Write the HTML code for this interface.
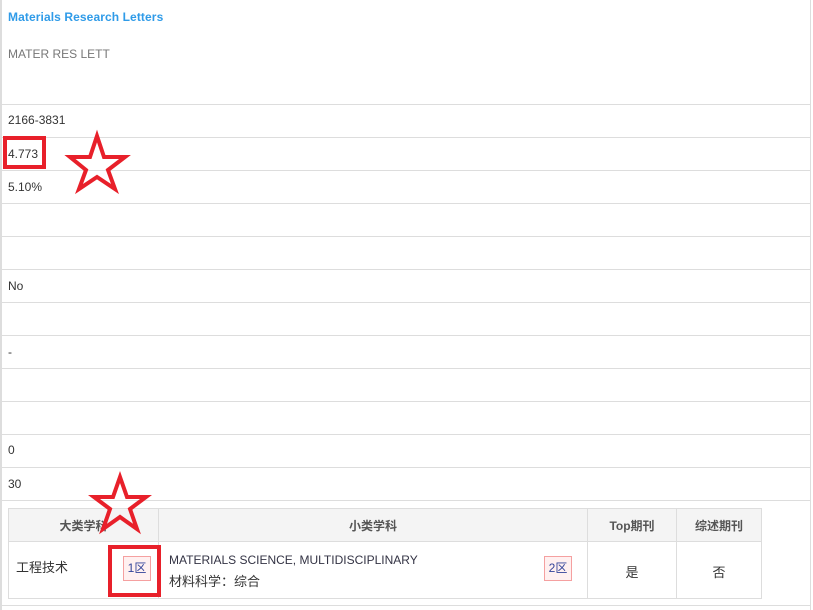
<!DOCTYPE html>
<html><head><meta charset="utf-8"><style>
*{margin:0;padding:0;box-sizing:border-box}
body{width:813px;height:610px;background:#fff;font-family:"Liberation Sans","Noto Sans CJK SC",sans-serif;font-size:12px;color:#333;position:relative;overflow:hidden}
.a{position:absolute}
.h{position:absolute;left:1px;width:810px;height:1px;background:#ddd}
.t{position:absolute;left:8px}
</style></head><body>
<div class="a" style="left:0;top:0;width:2px;height:610px;background:#ddd"></div>
<div class="a" style="left:810px;top:0;width:1px;height:610px;background:#ddd"></div>
<div class="t" style="top:10px;color:#2f9be8;font-weight:bold;letter-spacing:0.1px">Materials Research Letters</div>
<div class="t" style="top:47px;color:#777">MATER RES LETT</div>
<div class="h" style="top:104px"></div>
<div class="t" style="top:113px">2166-3831</div>
<div class="h" style="top:137px"></div>
<div class="t" style="top:147px">4.773</div>
<div class="h" style="top:170px"></div>
<div class="t" style="top:180px">5.10%</div>
<div class="h" style="top:203px"></div>
<div class="h" style="top:236px"></div>
<div class="h" style="top:269px"></div>
<div class="t" style="top:279px">No</div>
<div class="h" style="top:302px"></div>
<div class="h" style="top:335px"></div>
<div class="t" style="top:345px">-</div>
<div class="h" style="top:368px"></div>
<div class="h" style="top:401px"></div>
<div class="h" style="top:434px"></div>
<div class="t" style="top:443px">0</div>
<div class="h" style="top:467px"></div>
<div class="t" style="top:477px">30</div>
<div class="h" style="top:500px"></div>
<div class="h" style="top:605px"></div>
<div class="a" style="left:8px;top:508px;width:754px;height:91px;border:1px solid #ddd"></div>
<div class="a" style="left:9px;top:509px;width:752px;height:33px;background:#f4f4f4;border-bottom:1px solid #ddd"></div>
<div class="a" style="left:158px;top:508px;width:1px;height:91px;background:#ddd"></div>
<div class="a" style="left:587px;top:508px;width:1px;height:91px;background:#ddd"></div>
<div class="a" style="left:676px;top:508px;width:1px;height:91px;background:#ddd"></div>
<div class="a" style="left:9px;top:517px;width:149px;text-align:center;color:#555;font-weight:bold">大类学科</div>
<div class="a" style="left:159px;top:517px;width:428px;text-align:center;color:#555;font-weight:bold">小类学科</div>
<div class="a" style="left:588px;top:517px;width:88px;text-align:center;color:#555;font-weight:bold">Top期刊</div>
<div class="a" style="left:677px;top:517px;width:84px;text-align:center;color:#555;font-weight:bold">综述期刊</div>
<div class="a" style="left:16px;top:557px;font-size:13px">工程技术</div>
<div class="a" style="left:123px;top:556px;width:28px;height:25px;border:1px solid #f5a0a0;background:#fff0f0;color:#33449a;text-align:center;line-height:23px">1区</div>
<div class="a" style="left:169px;top:553px;color:#334">MATERIALS SCIENCE, MULTIDISCIPLINARY</div>
<div class="a" style="left:169px;top:571px;font-size:13px">材料科学：综合</div>
<div class="a" style="left:544px;top:556px;width:28px;height:25px;border:1px solid #f5a0a0;background:#fff0f0;color:#33449a;text-align:center;line-height:23px">2区</div>
<div class="a" style="left:588px;top:562px;width:88px;text-align:center;font-size:13px">是</div>
<div class="a" style="left:677px;top:562px;width:84px;text-align:center;font-size:13px">否</div>
<div class="a" style="left:3px;top:136px;width:43px;height:33px;border:4px solid #e8202a"></div>
<div class="a" style="left:108px;top:545px;width:53px;height:52px;border:4px solid #e8202a"></div>
<svg class="a" style="left:0;top:0" width="813" height="610">
<polygon points="97,136 104,157 125,157 108,170 115,189 97,177 79,189 86,170 70,157 90,157" fill="none" stroke="#e8202a" stroke-width="4"/>
<polygon points="120,477 127,497 146,497 130,509 137,529 120,517 103,529 110,509 94,497 113,497" fill="none" stroke="#e8202a" stroke-width="4"/>
</svg>
</body></html>
